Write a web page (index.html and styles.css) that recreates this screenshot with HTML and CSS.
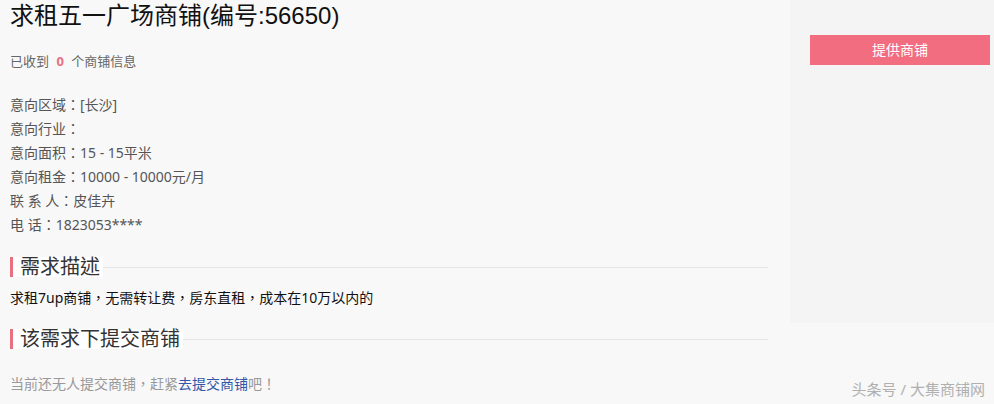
FILE: index.html
```html
<!DOCTYPE html>
<html>
<head>
    <meta charset="utf-8">
    <title>求租五一广场商铺</title>
    <link rel="stylesheet" href="styles.css">
</head>
<body>
    <div class="page">
        <div class="main">
            <h1 class="title">求租五一广场商铺(编号:56650)</h1>
            <p class="received">已收到 <b class="count">0</b> 个商铺信息</p>

            <ul class="info">
                <li>意向区域：[长沙]</li>
                <li>意向行业：</li>
                <li>意向面积：15 - 15平米</li>
                <li>意向租金：10000 - 10000元/月</li>
                <li>联 系 人：皮佳卉</li>
                <li>电 话：1823053****</li>
            </ul>

            <div class="section-head"><span>需求描述</span></div>
            <p class="desc">求租7up商铺，无需转让费，房东直租，成本在10万以内的</p>

            <div class="section-head"><span>该需求下提交商铺</span></div>
            <p class="empty">当前还无人提交商铺，赶紧<a href="#">去提交商铺</a>吧！</p>
        </div>

        <div class="side">
            <a class="offer-button" href="#">提供商铺</a>
        </div>
    </div>

    <div class="watermark">头条号 / 大集商铺网</div>
</body>
</html>
```

FILE: styles.css
```css
/* 页面基础 */
body {
    margin: 0;
    background: #f8f8f8;
    font-family: "Noto Sans", "Noto Sans CJK TC", sans-serif;
    color: #555;
    height: 404px;
    overflow: hidden;
    text-spacing-trim: space-all;
}

.page {
    display: flex;
    align-items: flex-start;
}

.main {
    width: 758px;
    padding-left: 10px;
}

.title {
    margin: 0;
    padding-top: 1px;
    font-family: "Liberation Sans", "Noto Sans CJK SC", sans-serif;
    font-size: 24px;
    font-weight: normal;
    line-height: 30px;
    color: #111;
}

.received {
    margin: 20px 0 0;
    font-size: 13px;
    line-height: 20px;
    color: #666;
}

.count {
    color: #e8707f;
    margin: 0 4px;
}

.info {
    list-style: none;
    margin: 22px 0 0;
    padding: 0;
    font-size: 14px;
    line-height: 24px;
    color: #555;
}

.section-head {
    display: flex;
    align-items: center;
    height: 24px;
}

.section-head span {
    border-left: 3px solid #e8707f;
    padding: 0 3px 0 7px;
    background: #fff;
    font-size: 20px;
    line-height: 20px;
    color: #333;
}

.section-head::after {
    content: "";
    flex: 1;
    border-top: 1px solid #e6e6e6;
}

.info + .section-head {
    margin-top: 18px;
}

.desc {
    margin: 9px 0 0;
    font-size: 14px;
    line-height: 20px;
    color: #111;
}

.desc + .section-head {
    margin-top: 19px;
}

.empty {
    margin: 23px 0 0;
    font-size: 14px;
    line-height: 20px;
    color: #999;
}

.empty a {
    color: #3356a8;
    text-decoration: none;
}

/* 右侧 */
.side {
    margin-left: 22px;
    width: 204px;
    height: 323px;
    background: #f4f4f4;
    padding: 35px 0 0 20px;
    box-sizing: border-box;
}

.offer-button {
    display: block;
    width: 180px;
    height: 30px;
    line-height: 30px;
    background: #f26d80;
    color: #fff;
    text-align: center;
    font-size: 14px;
    text-decoration: none;
}

.watermark {
    position: absolute;
    right: 9px;
    bottom: 5px;
    font-size: 15px;
    color: #b0b0b0;
}
```
